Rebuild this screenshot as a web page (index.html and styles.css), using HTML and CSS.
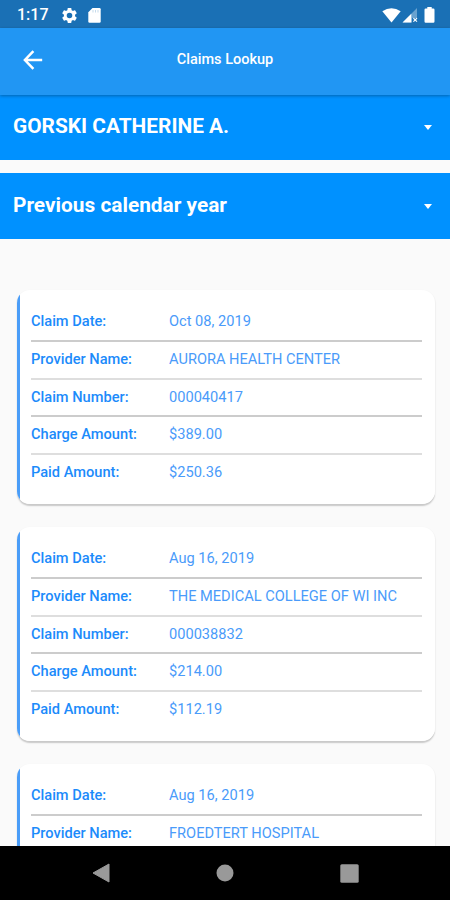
FILE: index.html
```
<!DOCTYPE html>
<html lang="en">
<head>
<meta charset="utf-8">
<title>Claims Lookup</title>
<link rel="stylesheet" href="styles.css">
</head>
<body>
<div class="screen">
  <div class="status">
    <span class="clock">1:17</span>
    <svg class="gear" width="17" height="17" viewBox="1 1 22 22"><path fill="#fff" d="M19.14 12.94c.04-.3.06-.61.06-.94s-.02-.64-.07-.94l2.03-1.58c.18-.14.23-.41.12-.61l-1.92-3.32c-.12-.22-.37-.29-.59-.22l-2.39.96c-.5-.38-1.03-.7-1.62-.94l-.36-2.54c-.04-.24-.24-.41-.48-.41h-3.84c-.24 0-.43.17-.47.41l-.36 2.54c-.59.24-1.13.57-1.62.94l-2.39-.96c-.22-.08-.47 0-.59.22L2.74 8.87c-.12.21-.08.47.12.61l2.03 1.58c-.05.3-.09.63-.09.94s.02.64.07.94l-2.03 1.58c-.18.14-.23.41-.12.61l1.92 3.32c.12.22.37.29.59.22l2.39-.96c.5.38 1.03.7 1.62.94l.36 2.54c.05.24.24.41.48.41h3.84c.24 0 .44-.17.47-.41l.36-2.54c.59-.24 1.13-.56 1.62-.94l2.39.96c.22.08.47 0 .59-.22l1.92-3.32c.12-.22.07-.47-.12-.61l-2.01-1.58zM12 15.6a3.6 3.6 0 1 1 0-7.2 3.6 3.6 0 0 1 0 7.2z"/></svg>
    <svg class="sd" width="13" height="15" viewBox="0 0 13 15"><path fill="#fff" d="M4.500 0H11.500Q12.700 0 12.700 1.200V13.500Q12.700 14.700 11.500 14.700H1.500Q.3 14.700 .3 13.500V4.200z"/><path stroke="#1a70b5" stroke-opacity=".25" d="M5 2v2.500M7.500 2v2.500M10 2v2.500"/></svg>
    <span class="spacer"></span>
    <svg width="19" height="15" viewBox="0 0 19 15"><path fill="#fff" d="M.3 3.200Q9.500-2.600 18.700 3.200L9.500 14.500z"/></svg>
    <svg class="signal" width="16" height="15" viewBox="0 0 16 15"><path fill="#fff" fill-opacity=".35" d="M15 0v10H10v4.500H.5z"/><path fill="#fff" d="M9.300 5.700V14.500H.5zM11 10.500l.8-.8 1.400 1.400 1.400-1.400.8.8-1.400 1.400 1.400 1.400-.8.800-1.400-1.400-1.400 1.400-.8-.8 1.400-1.400z"/></svg>
    <svg class="battery" width="11" height="16" viewBox="0 0 11 16"><path fill="#fff" d="M3.300 0h4.400v1.600h1.600q1.200 0 1.200 1.200v11.700q0 1.200-1.200 1.200H1.700q-1.200 0-1.200-1.200V2.800q0-1.200 1.200-1.200h1.600z"/></svg>
  </div>
  <header class="bar">
    <svg class="back" width="20" height="20" viewBox="0 0 20 20"><path fill="none" stroke="#fff" stroke-width="2.500" d="M19.200 10H2.200M10.400 1.200L1.900 10l8.500 8.800"/></svg>
    <h1>Claims Lookup</h1>
  </header>
  <main>
    <div class="select first"><span class="value">GORSKI CATHERINE A.</span><i class="caret"></i></div>
    <div class="select second"><span class="value">Previous calendar year</span><i class="caret"></i></div>
    <div class="cards">
      <dl class="card">
        <div class="row"><dt>Claim Date:</dt><dd>Oct 08, 2019</dd></div>
        <div class="row"><dt>Provider Name:</dt><dd>AURORA HEALTH CENTER</dd></div>
        <div class="row"><dt>Claim Number:</dt><dd>000040417</dd></div>
        <div class="row"><dt>Charge Amount:</dt><dd>$389.00</dd></div>
        <div class="row"><dt>Paid Amount:</dt><dd>$250.36</dd></div>
      </dl>
      <dl class="card">
        <div class="row"><dt>Claim Date:</dt><dd>Aug 16, 2019</dd></div>
        <div class="row"><dt>Provider Name:</dt><dd>THE MEDICAL COLLEGE OF WI INC</dd></div>
        <div class="row"><dt>Claim Number:</dt><dd>000038832</dd></div>
        <div class="row"><dt>Charge Amount:</dt><dd>$214.00</dd></div>
        <div class="row"><dt>Paid Amount:</dt><dd>$112.19</dd></div>
      </dl>
      <dl class="card">
        <div class="row"><dt>Claim Date:</dt><dd>Aug 16, 2019</dd></div>
        <div class="row"><dt>Provider Name:</dt><dd>FROEDTERT HOSPITAL</dd></div>
      </dl>
    </div>
  </main>
  <nav class="nav">
    <svg width="18" height="20" viewBox="0 0 18 20"><path fill="#999" stroke="#999" stroke-linejoin="round" d="M17 1v18L1 10z"/></svg>
    <svg width="18" height="18" viewBox="0 0 18 18"><circle cx="9" cy="9" r="8.500" fill="#999"/></svg>
    <svg width="19" height="19" viewBox="0 0 19 19"><rect x=".3" y=".3" width="18.400" height="18.400" rx="1.500" fill="#999"/></svg>
  </nav>
</div>
</body>
</html>
```
FILE: styles.css
```
* { box-sizing: border-box; }
body { margin: 0; font-family: Roboto, sans-serif; background: #fafafa; }
svg { display: block; flex: none; }
.screen { width: 450px; height: 900px; display: flex; flex-direction: column; overflow: hidden; }
.status { height: 28px; flex: none; display: flex; align-items: center; padding: 2px 15px 0 17px; background: #1a70b5; color: #fff; }
.clock { width: 44px; font-size: 16px; font-weight: 500; line-height: 28px; }
.sd { margin-left: 10px; }
.spacer { flex: 1; }
.signal { margin-left: 1px; }
.battery { margin-left: 6px; }
.bar { height: 67px; flex: none; display: grid; grid-template-columns: 1fr auto 1fr; align-items: center; background: #2196f3; color: #fff; box-shadow: 0 1px 3px rgba(0, 0, 0, .3); z-index: 1; padding-bottom: 3px; }
.back { margin-left: 23px; }
.bar h1 { margin: 0; font-size: 14.500px; font-weight: 500; line-height: 20px; }
main { flex: 1; min-height: 0; overflow: hidden; }
.select { display: flex; align-items: center; justify-content: space-between; padding: 0 18px 0 13px; background: #0091ff; color: #fff; }
.first { height: 64.500px; padding-bottom: 3px; }
.second { height: 65.500px; margin-top: 13.500px; padding-bottom: 1px; }
.value { font-size: 20.850px; font-weight: 700; line-height: 24px; }
.caret { border: 4.500px solid transparent; border-top-width: 5px; border-top-color: #fff; border-bottom: 0; margin-top: 3px; }
.cards { padding: 51.500px 15.500px 0 16.500px; display: flex; flex-direction: column; gap: 23px; }
.card { margin: 0; height: 214px; padding: 12px 12.500px 0 14.500px; background: linear-gradient(to right, #4a9df8 2.500px, #fff 3px); border-radius: 13px; box-shadow: 0 1.500px 1.500px rgba(0, 0, 0, .2); }
.row { height: 38px; display: grid; grid-template-columns: 138px 1fr; align-items: center; font-size: 14.620px; line-height: 20px; white-space: nowrap; }
.row + .row { border-top: 2px solid #ccc; padding-bottom: 2px; }
.row:nth-child(even) + .row { border-top-color: #dedede; }
.row:nth-child(3), .row:nth-child(5) { height: 37px; }
dt { font-weight: 500; color: #1c8bfb; }
dd { margin: 0; font-weight: 400; color: #4a9bfa; }
.nav { height: 54px; flex: none; background: #000; display: flex; align-items: center; justify-content: space-between; padding: 0 91px 0 92px; }
```
